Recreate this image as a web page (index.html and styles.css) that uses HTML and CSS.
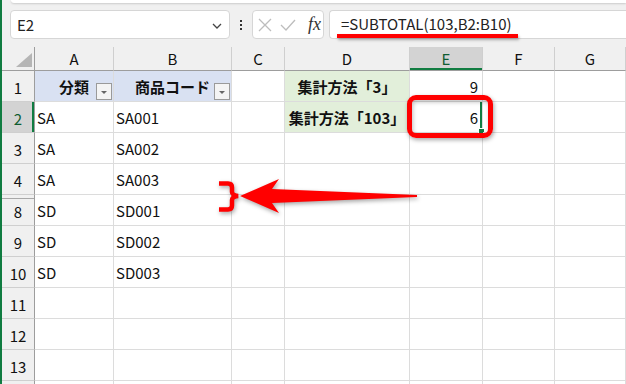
FILE: index.html
```html
<html lang="ja">
  <head>
    <meta charset="UTF-8" />
    <title>SUBTOTAL</title>
    <link rel="stylesheet" href="styles.css">
  </head>
  <body>
    <div class="window">
      <!-- ribbon edge -->
      <div class="ribbon"></div>

      <!-- formula bar -->
      <div class="formula-bar">
        <div class="name-box">
          <span>E2</span>
          <svg class="chevron" width="10" height="6" viewBox="0 0 10 6"><path d="M1 1 L5 5 L9 1" fill="none" stroke="#444" stroke-width="1.3"/></svg>
        </div>
        <div class="dots"><i></i><i></i><i></i></div>
        <div class="fx-buttons">
          <svg width="14" height="14" viewBox="0 0 14 14"><path d="M1 1 L13 13 M13 1 L1 13" stroke="#bdbdbd" stroke-width="1.3"/></svg>
          <svg width="16" height="14" viewBox="0 0 16 14"><path d="M1 7 L6 12 L15 2" fill="none" stroke="#bdbdbd" stroke-width="1.3"/></svg>
          <span class="fx">fx</span>
        </div>
        <div class="formula">=SUBTOTAL(103,B2:B10)</div>
      </div>

      <!-- sheet -->
      <div class="sheet">
        <div class="corner"></div>
        <div class="col-head">A</div>
        <div class="col-head">B</div>
        <div class="col-head">C</div>
        <div class="col-head">D</div>
        <div class="col-head active">E</div>
        <div class="col-head">F</div>
        <div class="col-head">G</div>

        <div class="row-head">1</div>
        <div class="cell head blue">分類<span class="filter"></span></div>
        <div class="cell head blue">商品コード<span class="filter"></span></div>
        <div class="cell"></div>
        <div class="cell head green">集計方法「3」</div>
        <div class="cell num">9</div>
        <div class="cell"></div>
        <div class="cell"></div>

        <div class="row-head active">2</div>
        <div class="cell">SA</div>
        <div class="cell">SA001</div>
        <div class="cell"></div>
        <div class="cell head green">集計方法「103」</div>
        <div class="cell num selected">6<span class="handle"></span></div>
        <div class="cell"></div>
        <div class="cell"></div>

        <div class="row-head">3</div>
        <div class="cell">SA</div>
        <div class="cell">SA002</div>
        <div class="cell"></div>
        <div class="cell"></div>
        <div class="cell"></div>
        <div class="cell"></div>
        <div class="cell"></div>

        <div class="row-head">4</div>
        <div class="cell">SA</div>
        <div class="cell">SA003</div>
        <div class="cell"></div>
        <div class="cell"></div>
        <div class="cell"></div>
        <div class="cell"></div>
        <div class="cell"></div>

        <div class="row-head hidden-above">8</div>
        <div class="cell">SD</div>
        <div class="cell">SD001</div>
        <div class="cell"></div>
        <div class="cell"></div>
        <div class="cell"></div>
        <div class="cell"></div>
        <div class="cell"></div>

        <div class="row-head">9</div>
        <div class="cell">SD</div>
        <div class="cell">SD002</div>
        <div class="cell"></div>
        <div class="cell"></div>
        <div class="cell"></div>
        <div class="cell"></div>
        <div class="cell"></div>

        <div class="row-head">10</div>
        <div class="cell">SD</div>
        <div class="cell">SD003</div>
        <div class="cell"></div>
        <div class="cell"></div>
        <div class="cell"></div>
        <div class="cell"></div>
        <div class="cell"></div>

        <div class="row-head">11</div>
        <div class="cell"></div><div class="cell"></div><div class="cell"></div><div class="cell"></div><div class="cell"></div><div class="cell"></div><div class="cell"></div>

        <div class="row-head">12</div>
        <div class="cell"></div><div class="cell"></div><div class="cell"></div><div class="cell"></div><div class="cell"></div><div class="cell"></div><div class="cell"></div>

        <div class="row-head">13</div>
        <div class="cell"></div><div class="cell"></div><div class="cell"></div><div class="cell"></div><div class="cell"></div><div class="cell"></div><div class="cell"></div>

        <div class="row-head"></div>
        <div class="cell"></div><div class="cell"></div><div class="cell"></div><div class="cell"></div><div class="cell"></div><div class="cell"></div><div class="cell"></div>
      </div>

      <!-- annotations -->
      <div class="mark-underline"></div>
      <div class="mark-box"></div>
      <svg class="mark-arrow" width="626" height="384" viewBox="0 0 626 384">
        <path d="M219 183.5 L228 183.5 Q232 183.5 232 187.5 L232 192 Q232 195 238 196 Q232 197 232 200 L232 205.5 Q232 209.5 228 209.5 L219 209.5" fill="none" stroke="#ff0000" stroke-width="4.5"/>
        <path d="M240 196 L279 179 L272 189 L417 195 L417 197 L272 203 L279 213 Z" fill="#ff0000"/>
      </svg>
    </div>
  </body>
</html>
```

FILE: styles.css
```css
body {
  margin: 0;
  padding: 0;
  font-family: "Noto Sans CJK JP", "Noto Sans", sans-serif;
  overflow: hidden;
}
.window {
  position: relative;
  width: 624px;
  height: 384px;
  border-left: 2px solid #107c41;
  background-color: #f0f0f0;
  overflow: hidden;
}
.ribbon {
  height: 3px;
  margin-left: 9px;
  background-color: white;
  border-radius: 0 0 0 5px;
  box-shadow: 0 1px 2px rgba(0, 0, 0, 0.15);
}

/* formula bar */
.formula-bar {
  display: flex;
  align-items: center;
  height: 29px;
  margin-top: 7px;
  margin-bottom: 8px;
  padding-left: 8px;
}
.name-box {
  width: 220px;
  height: 29px;
  box-sizing: border-box;
  background-color: white;
  border: 1px solid #d6d6d6;
  border-radius: 4px;
  display: flex;
  align-items: center;
  justify-content: space-between;
  padding: 0 7px 0 6px;
  font-size: 15px;
  color: #222;
}
.chevron {
  margin-top: 2px;
}
.dots {
  width: 22px;
  display: flex;
  flex-direction: column;
  align-items: center;
  gap: 2px;
}
.dots i {
  width: 2px;
  height: 2px;
  background-color: #333;
}
.fx-buttons {
  width: 72px;
  height: 29px;
  box-sizing: border-box;
  border: 1px solid #d6d6d6;
  border-radius: 4px;
  background-color: white;
  display: flex;
  align-items: center;
  gap: 8px;
  padding-left: 5px;
}
.fx {
  font-family: "Liberation Serif", serif;
  font-style: italic;
  font-size: 18px;
  color: #333;
  margin-left: 4px;
}
.formula {
  flex-grow: 1;
  height: 29px;
  margin-left: 5px;
  box-sizing: border-box;
  border: 1px solid #d6d6d6;
  border-right: none;
  border-radius: 4px 0 0 4px;
  background-color: white;
  font-size: 15px;
  line-height: 26px;
  padding-left: 11px;
  color: #222;
}

/* sheet grid */
.sheet {
  display: grid;
  grid-template-columns: 33px 79px 118px 53px 125px 73px 72px 1fr;
  grid-template-rows: 24px repeat(11, 31px);
  background-color: white;
  font-size: 15px;
  color: #111;
}
.corner,
.col-head,
.row-head {
  background-color: #f0f0f0;
  box-sizing: border-box;
}
.corner {
  position: relative;
  border-right: 1px solid #9d9d9d;
  border-bottom: 1px solid #9d9d9d;
}
.corner::after {
  content: "";
  position: absolute;
  right: 2px;
  bottom: 3px;
  border-left: 16px solid transparent;
  border-bottom: 14px solid #b5b5b5;
}
.col-head {
  border-right: 1px solid #cfcfcf;
  border-bottom: 1px solid #9d9d9d;
  text-align: center;
  line-height: 23px;
}
.col-head.active {
  background-color: #d3d3d3;
  color: #0e5c30;
  box-shadow: inset 0 -2px 0 #107c41;
}
.row-head {
  border-right: 1px solid #9d9d9d;
  border-bottom: 1px solid #cfcfcf;
  text-align: center;
  line-height: 34px;
}
.row-head.active {
  background-color: #d3d3d3;
  color: #0e5c30;
  box-shadow: inset -2px 0 0 #107c41;
}
.row-head.hidden-above {
  box-shadow: inset 0 3px 0 #f0f0f0, inset 0 4px 0 #a8a8a8;
}
.cell {
  position: relative;
  box-sizing: border-box;
  border-right: 1px solid #dcdcdc;
  border-bottom: 1px solid #dcdcdc;
  padding: 0 2px;
  line-height: 31px;
  white-space: nowrap;
}
.cell.head {
  font-weight: bold;
  text-align: center;
}
.cell.blue {
  background-color: #d9e1f2;
}
.cell.green {
  background-color: #e2efda;
}
.cell.num {
  text-align: right;
  padding-right: 4px;
}
.cell.selected {
  box-shadow: inset -2px 0 0 #107c41;
}
.handle {
  position: absolute;
  right: -3px;
  bottom: -3px;
  width: 5px;
  height: 5px;
  background-color: #107c41;
  border: 1px solid white;
}
.filter {
  position: absolute;
  right: 1px;
  bottom: 1px;
  width: 16px;
  height: 17px;
  box-sizing: border-box;
  border: 1px solid #9a9a9a;
  background-color: #f4f4f4;
}
.filter::after {
  content: "";
  position: absolute;
  left: 4px;
  top: 7px;
  border-left: 3px solid transparent;
  border-right: 3px solid transparent;
  border-top: 3px solid #666;
}

/* annotations */
.mark-underline {
  position: absolute;
  left: 335px;
  top: 34px;
  width: 181px;
  height: 4px;
  background-color: #ff0000;
  box-shadow: 1px 2px 3px rgba(0, 0, 0, 0.3);
}
.mark-box {
  position: absolute;
  left: 405px;
  top: 95px;
  width: 76px;
  height: 33px;
  border: 5px solid #ff0000;
  border-radius: 9px;
  box-shadow: 1px 2px 4px rgba(0, 0, 0, 0.35), inset 1px 2px 4px rgba(0, 0, 0, 0.25);
}
.mark-arrow {
  position: absolute;
  left: -2px;
  top: 0;
  pointer-events: none;
  filter: drop-shadow(1px 2px 2px rgba(0, 0, 0, 0.35));
}
```
